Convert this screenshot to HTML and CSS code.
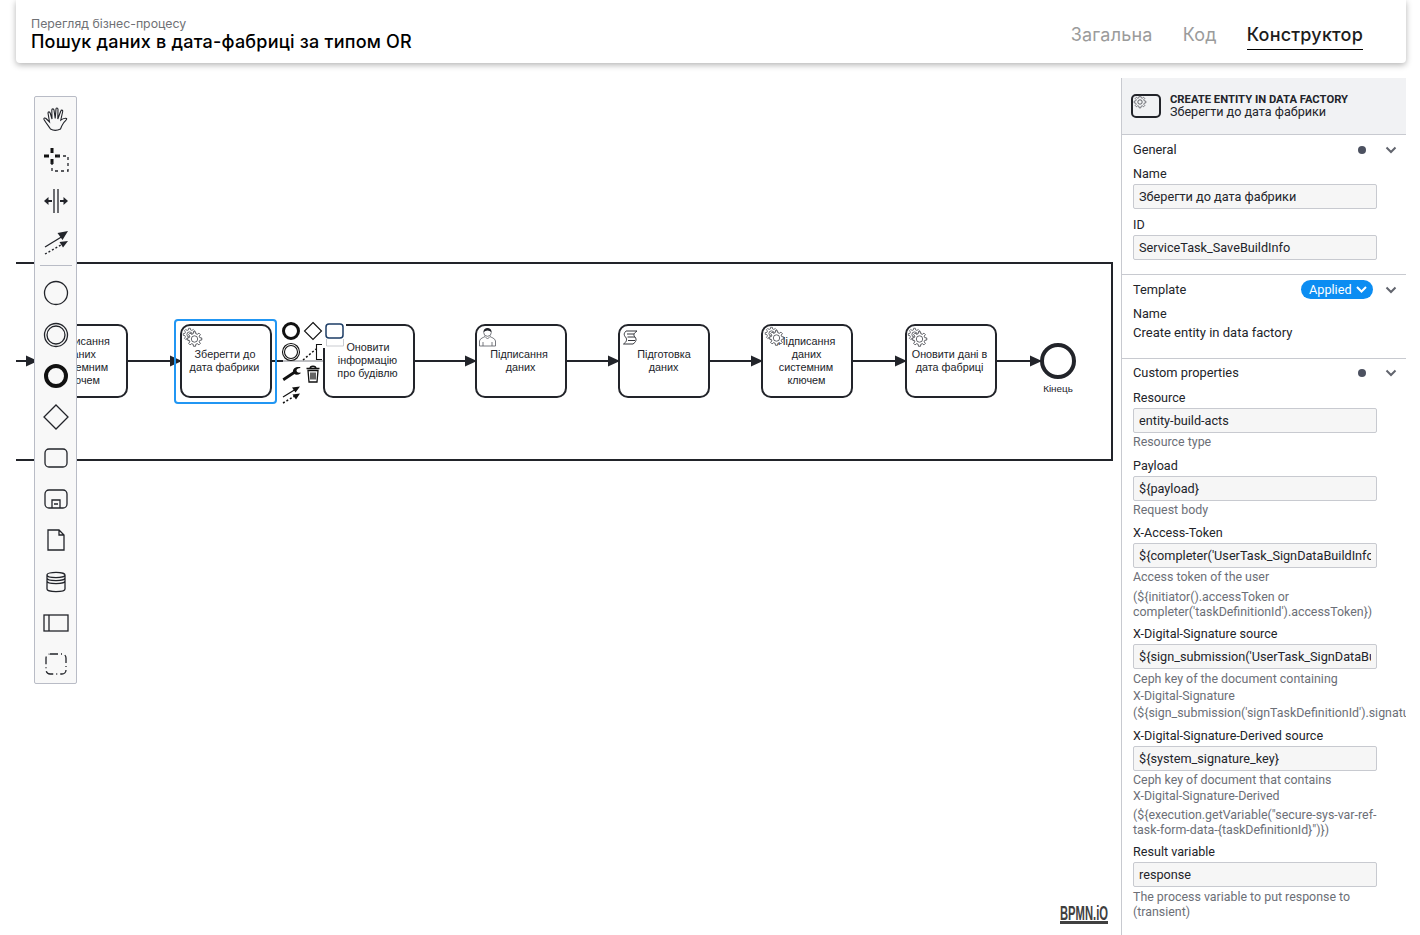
FILE: index.html
```html
<!DOCTYPE html>
<html>
	<head>
		<meta charset="utf-8">
		<title>Перегляд бізнес-процесу</title>
		<link rel="stylesheet" href="styles.css">
	</head>
	<body>
		<div class="top">
			<div class="top-title">
				<div class="top-sub">Перегляд бізнес-процесу</div>
				<div class="top-name">Пошук даних в дата-фабриці за типом OR</div>
			</div>
			<div class="tabs">
				<div class="tab">Загальна</div>
				<div class="tab">Код</div>
				<div class="tab tab-on">Конструктор</div>
			</div>
		</div>

		<div class="main">
			<div class="canvas">
				<svg class="diagram" width="1105" height="857" viewBox="16 78 1105 857">
					<defs>
						<polygon id="gear" points="5.05,-1.26 6.93,-.97 6.93,.97 5.05,1.26 4.46,2.68 5.59,4.21 4.21,5.59 2.68,4.46 1.26,5.05 .97,6.93 -.97,6.93 -1.26,5.05 -2.68,4.46 -4.21,5.59 -5.59,4.21 -4.46,2.68 -5.05,1.26 -6.93,.97 -6.93,-.97 -5.05,-1.26 -4.46,-2.68 -5.59,-4.21 -4.21,-5.59 -2.68,-4.46 -1.26,-5.05 -.97,-6.93 .97,-6.93 1.26,-5.05 2.68,-4.46 4.21,-5.59 5.59,-4.21 4.46,-2.68"/>
						<g id="service">
							<use href="#gear" class="gear" transform="translate(6.5,6.5) scale(.9)"/>
							<circle class="gear" cx="6.5" cy="6.5" r="2.6"/>
							<use href="#gear" class="gear" transform="translate(11.5,11) scale(1.05)"/>
							<circle class="gear" cx="11.5" cy="11" r="3.2"/>
						</g>
						<g id="arrowhead"><path d="M1 0 L-11 -5.500 L-11 5.500 Z" class="head"/></g>
					</defs>

					<path class="lane" d="M16 263 H1112 V460 H16"/>

					<path class="flow" d="M16 361 H37 M127 361 H181 M414 361 H476 M566 361 H619 M709 361 H762 M852 361 H906 M996 361 H1041 M271 361 H283"/>
					<path class="flow-thin" d="M283 361 H324"/>
					<use href="#arrowhead" x="37" y="361"/>
					<use href="#arrowhead" x="181" y="361"/>
					<use href="#arrowhead" x="476" y="361"/>
					<use href="#arrowhead" x="619" y="361"/>
					<use href="#arrowhead" x="762" y="361"/>
					<use href="#arrowhead" x="906" y="361"/>
					<use href="#arrowhead" x="1041" y="361"/>

					<rect class="task" x="37" y="325" width="90" height="72" rx="9"/>
					<text class="lbl" x="81" y="345">Підписання</text>
					<text class="lbl" x="81" y="358">даних</text>
					<text class="lbl" x="81" y="371">системним</text>
					<text class="lbl" x="81" y="384">ключем</text>

					<rect class="select" x="175" y="320" width="101" height="83" rx="3"/>
					<rect class="task" x="181" y="325" width="90" height="72" rx="9"/>
					<use href="#service" x="183" y="328"/>
					<text class="lbl" x="225" y="358">Зберегти до</text>
					<text class="lbl" x="224.500" y="371">дата фабрики</text>

					<rect class="task" x="324" y="325" width="90" height="72" rx="9"/>
					<text class="lbl" x="368" y="351">Оновити</text>
					<text class="lbl" x="367.500" y="364">інформацію</text>
					<text class="lbl" x="367.500" y="377">про будівлю</text>

					<rect class="task" x="476" y="325" width="90" height="72" rx="9"/>
					<circle class="user-head" cx="487.500" cy="332.500" r="3.800"/>
					<path class="user-hair" d="M483.500 332 C483.500 326.500 491.500 326.500 491.500 332 C489 330 486 330 483.500 332 Z"/>
					<path class="user-body" d="M479.500 346 V341 C480 338 484 337.500 485 336.500 L487.500 339 L490 336.500 C491 337.500 495 338 495.500 341 V346 Z M483 346 V342 M492 346 V342"/>
					<text class="lbl" x="519" y="358">Підписання</text>
					<text class="lbl" x="520.500" y="371">даних</text>

					<rect class="task" x="619" y="325" width="90" height="72" rx="9"/>
					<path class="script" d="M626 331 H637 C634 333 633 335 635 337 C637 339.500 636 342 633 344 H623.500 C626.500 342 627.500 339.500 625.500 337 C623.500 335 624 333 626 331 Z M627 334 H634 M627.500 337 H635 M628 340.500 H635"/>
					<text class="lbl" x="664" y="358">Підготовка</text>
					<text class="lbl" x="663.500" y="371">даних</text>

					<rect class="task" x="762" y="325" width="90" height="72" rx="9"/>
					<text class="lbl" x="806.500" y="345">Підписання</text>
					<text class="lbl" x="806.500" y="358">даних</text>
					<text class="lbl" x="806" y="371">системним</text>
					<text class="lbl" x="806.500" y="384">ключем</text>
					<use href="#service" x="765" y="327"/>

					<rect class="task" x="906" y="325" width="90" height="72" rx="9"/>
					<use href="#service" x="908" y="328"/>
					<text class="lbl" x="949.500" y="358">Оновити дані в</text>
					<text class="lbl" x="949.500" y="371">дата фабриці</text>

					<circle class="end" cx="1058" cy="361" r="16"/>
					<text class="lbl lbl-small" x="1058" y="392">Кінець</text>

					<!-- context pad -->
					<rect class="pad-mask" x="321" y="322" width="25" height="26"/>
					<path class="pad-stub" d="M326.500 339 V346 H343.500 V339"/>
					<circle class="pad-end" cx="291" cy="331" r="7.500"/>
					<path class="pad-line" d="M313 322.500 L321.500 331 L313 339.500 L304.500 331 Z"/>
					<rect class="pad-task" x="326" y="324" width="17" height="14" rx="3"/>
					<circle class="pad-line" cx="291" cy="352" r="8.500"/>
					<circle class="pad-line" cx="291" cy="352" r="6.500"/>
					<path class="pad-dots" d="M303 360 L316 349"/>
					<path class="pad-line" d="M322 344.500 H316.500 V359.500 H322"/>
					<path class="pad-fill" d="M282.500 378.500 L293 371.500 C292.800 368.500 295.500 366.500 300 367 L300.500 368 C298 368 296.500 369 296.500 370.500 C296.500 372 298 373 300.500 372.500 L300.500 373.500 C298 375 295.500 375 294.500 374 L284 381 Z"/>
					<path class="pad-trash" d="M306.500 368.500 H319.500 M310 368.500 C310 365.500 316 365.500 316 368.500 M308 370.500 L309 382 H317 L318 370.500 Z M311 372.500 V379.500 M313 372.500 V379.500 M315 372.500 V379.500"/>
					<path class="pad-line" d="M283 397 L296 389"/>
					<path class="pad-fill" d="M300 386.500 L292 387.500 L295.500 392.500 Z M300 393.500 L292.500 394.500 L296 399.500 Z"/>
					<path class="pad-dots" d="M283 403 L295 396"/>

					<text class="logo" x="1060" y="920" textLength="48" lengthAdjust="spacingAndGlyphs">BPMN.iO</text>
					<rect class="logo-bar" x="1060" y="921" width="48" height="3"/>
				</svg>

				<div class="palette">
					<div class="tool">
						<svg width="30" height="30" viewBox="0 0 30 30"><path class="ic-hand" d="M9.500 25 C7.500 22 5 19 3 15.500 C2.500 14 4 13.500 5 14.500 L8.500 18 L7 9 C7 7.500 8.800 7.500 9.200 9 L11 15 L10.800 6 C10.800 4.500 12.800 4.500 13 6 L14.200 14.500 L15 5 C15.200 3.500 17 3.700 17 5.500 L16.800 15 L19.800 7 C20.300 5.500 22 6 21.700 7.500 L19.800 16 C21 15 24 14 25.500 14.500 C26.500 15.500 24 17 22.500 19 C21.500 20.500 20.500 22 19.500 25 C16.500 26.500 12 26.500 9.500 25 Z"/></svg>
					</div>
					<div class="tool">
						<svg width="30" height="30" viewBox="0 0 30 30"><path class="ic-bold" d="M11 3 V8 M11 14 V19 M3 11 H8 M14 11 H19"/><path class="ic-dash" d="M16 11 H27 V26 H11 V16"/></svg>
					</div>
					<div class="tool">
						<svg width="30" height="30" viewBox="0 0 30 30"><path class="ic" d="M13 3 V27 M17 3 V27"/><path class="ic-fill" d="M3 15 L7.500 11 V14 H11 V16 H7.500 V19 Z M27 15 L22.500 11 V14 H19 V16 H22.500 V19 Z"/></svg>
					</div>
					<div class="tool">
						<svg width="30" height="30" viewBox="0 0 30 30"><path class="ic" d="M4 20 L22 9"/><path class="ic-fill" d="M27 4 L16.500 6 L21.500 13 Z M27 14 L18.500 15 L22 20.500 Z"/><path class="ic-dots" d="M4 27 L20 18"/></svg>
					</div>
					<div class="sep"></div>
					<div class="tool">
						<svg width="30" height="30" viewBox="0 0 30 30"><circle class="ic" cx="15" cy="15" r="11.500"/></svg>
					</div>
					<div class="tool">
						<svg width="30" height="30" viewBox="0 0 30 30"><circle class="ic" cx="15" cy="15" r="11.500"/><circle class="ic" cx="15" cy="15" r="9"/></svg>
					</div>
					<div class="tool">
						<svg width="30" height="30" viewBox="0 0 30 30"><circle class="ic-thick" cx="15" cy="15" r="10"/></svg>
					</div>
					<div class="tool">
						<svg width="30" height="30" viewBox="0 0 30 30"><path class="ic" d="M15 3 L27 15 L15 27 L3 15 Z"/></svg>
					</div>
					<div class="tool">
						<svg width="30" height="30" viewBox="0 0 30 30"><rect class="ic" x="4" y="6" width="22" height="18" rx="4"/></svg>
					</div>
					<div class="tool">
						<svg width="30" height="30" viewBox="0 0 30 30"><rect class="ic" x="4" y="6" width="22" height="18" rx="4"/><path class="ic" d="M11 24 V16 H19 V24 M13 20 H17"/></svg>
					</div>
					<div class="tool">
						<svg width="30" height="30" viewBox="0 0 30 30"><path class="ic" d="M7 5 H18 L23 10 V25 H7 Z M18 5 V10 H23"/></svg>
					</div>
					<div class="tool">
						<svg width="30" height="30" viewBox="0 0 30 30"><path class="ic" d="M6 8 C6 4.500 24 4.500 24 8 V22 C24 25.500 6 25.500 6 22 Z M6 8 C6 11.500 24 11.500 24 8 M6 11 C6 14.500 24 14.500 24 11 M6 14 C6 17.500 24 17.500 24 14"/></svg>
					</div>
					<div class="tool">
						<svg width="30" height="30" viewBox="0 0 30 30"><rect class="ic" x="3" y="7" width="24" height="16"/><path class="ic" d="M8 7 V23"/></svg>
					</div>
					<div class="tool">
						<svg width="30" height="30" viewBox="0 0 30 30"><rect class="ic-dashdot" x="5" y="5" width="20" height="20" rx="4"/></svg>
					</div>
				</div>
			</div>

			<div class="panel">
				<div class="panel-head">
					<svg class="panel-icon" width="30" height="24" viewBox="0 0 30 24">
						<rect class="ic-task" x="1" y="1" width="28" height="22" rx="4"/>
						<polygon class="ic-gear" transform="translate(9,8) scale(.85)" points="5.05,-1.26 6.93,-.97 6.93,.97 5.05,1.26 4.46,2.68 5.59,4.21 4.21,5.59 2.68,4.46 1.26,5.05 .97,6.93 -.97,6.93 -1.26,5.05 -2.68,4.46 -4.21,5.59 -5.59,4.21 -4.46,2.68 -5.05,1.26 -6.93,.97 -6.93,-.97 -5.05,-1.26 -4.46,-2.68 -5.59,-4.21 -4.21,-5.59 -2.68,-4.46 -1.26,-5.05 -.97,-6.93 .97,-6.93 1.26,-5.05 2.68,-4.46 4.21,-5.59 5.59,-4.21 4.46,-2.68"/>
						<circle class="ic-gear" cx="9" cy="8" r="2.200"/>
					</svg>
					<div class="panel-text">
						<div class="panel-type">CREATE ENTITY IN DATA FACTORY</div>
						<div class="panel-name">Зберегти до дата фабрики</div>
					</div>
				</div>

				<div class="group group-general">
					<div class="group-head">
						<span class="group-title">General</span>
						<span class="dot"></span>
						<svg class="chev" width="12" height="8" viewBox="0 0 12 8"><path d="M1.500 1.500 L6 6 L10.500 1.500"/></svg>
					</div>
					<div class="entry">
						<div class="label">Name</div>
						<input class="field" value="Зберегти до дата фабрики">
					</div>
					<div class="entry">
						<div class="label">ID</div>
						<input class="field" value="ServiceTask_SaveBuildInfo">
					</div>
				</div>

				<div class="group group-template">
					<div class="group-head">
						<span class="group-title">Template</span>
						<span class="badge">Applied
							<svg width="11" height="7" viewBox="0 0 11 7"><path d="M1 1 L5.500 5.500 L10 1"/></svg>
						</span>
						<svg class="chev" width="12" height="8" viewBox="0 0 12 8"><path d="M1.500 1.500 L6 6 L10.500 1.500"/></svg>
					</div>
					<div class="label label-name">Name</div>
					<div class="static">Create entity in data factory</div>
				</div>

				<div class="group">
					<div class="group-head">
						<span class="group-title">Custom properties</span>
						<span class="dot"></span>
						<svg class="chev" width="12" height="8" viewBox="0 0 12 8"><path d="M1.500 1.500 L6 6 L10.500 1.500"/></svg>
					</div>
					<div class="entry">
						<div class="label">Resource</div>
						<input class="field" value="entity-build-acts">
						<div class="desc">Resource type</div>
					</div>
					<div class="entry">
						<div class="label">Payload</div>
						<input class="field" value="${payload}">
						<div class="desc">Request body</div>
					</div>
					<div class="entry">
						<div class="label">X-Access-Token</div>
						<input class="field" value="${completer('UserTask_SignDataBuildInfo').accessToken}">
						<div class="desc">Access token of the user</div>
						<div class="desc desc-more desc-gap">(${initiator().accessToken or<br>completer('taskDefinitionId').accessToken})</div>
					</div>
					<div class="entry">
						<div class="label">X-Digital-Signature source</div>
						<input class="field" value="${sign_submission('UserTask_SignDataBuildInfo').signatureDocumentId}">
						<div class="desc desc-wide">Ceph key of the document containing<br>X-Digital-Signature<br>(${sign_submission('signTaskDefinitionId').signatureDocumentId})</div>
					</div>
					<div class="entry">
						<div class="label">X-Digital-Signature-Derived source</div>
						<input class="field" value="${system_signature_key}">
						<div class="desc">Ceph key of document that contains<br>X-Digital-Signature-Derived</div>
						<div class="desc desc-more">(${execution.getVariable("secure-sys-var-ref-<br>task-form-data-{taskDefinitionId}")})</div>
					</div>
					<div class="entry">
						<div class="label">Result variable</div>
						<input class="field" value="response">
						<div class="desc desc-more">The process variable to put response to<br>(transient)</div>
					</div>
				</div>
			</div>
		</div>
	</body>
</html>
```

FILE: styles.css
```css
*{
	margin: 0;
	padding: 0;
	box-sizing: border-box;
}

html,body{
	height: 100%;
	overflow: hidden;
	background: #fff;
}

body{
	font-family: "Inter", "Liberation Sans", sans-serif;
	color: #22242a;
}

/* top bar */
.top{
	display: flex;
	justify-content: space-between;
	align-items: center;
	height: 63px;
	margin: 0 14px 0 16px;
	padding: 0 43px 0 15px;
	background: #fff;
	border-radius: 0 0 4px 4px;
	box-shadow: 0 2px 6px rgba(0,0,0,0.3);
}
.top-title{
	margin-top: 5px;
}
.top-sub{
	font-size: 12.300px;
	line-height: 16px;
	padding-top: 1px;
	margin-bottom: -1px;
	color: #6f7175;
}
.top-name{
	font-size: 18px;
	line-height: 22px;
	font-weight: 500;
	letter-spacing: 0.22px;
	color: #000;
}
.tabs{
	display: flex;
	gap: 30px;
	margin-top: 10px;
}
.tab{
	font-size: 18px;
	line-height: 24px;
	letter-spacing: 0.2px;
	padding-bottom: 2px;
	color: #9b9b9b;
	border-bottom: 1px solid transparent;
}
.tab-on{
	color: #1d1d1d;
	font-weight: 500;
	border-bottom: 1px solid #000;
}

.main{
	display: flex;
	height: 857px;
	margin: 15px 14px 0 16px;
}

/* diagram */
.canvas{
	position: relative;
	flex: 1;
}
.diagram{
	display: block;
}
.lane,.flow,.task,.end{
	fill: none;
	stroke: #22242a;
	stroke-width: 2;
}
.task{
	fill: #fff;
}
.end{
	stroke-width: 4;
	fill: #fff;
}
.flow-thin{
	fill: none;
	stroke: #7d7f85;
	stroke-width: 1;
}
.head{
	fill: #22242a;
}
.select{
	fill: none;
	stroke: #2196f3;
	stroke-width: 2;
}
.lbl{
	font-family: "Liberation Sans", "DejaVu Sans", sans-serif;
	font-size: 10.8px;
	text-anchor: middle;
	fill: #22242a;
}
.lbl-small{
	font-size: 9.9px;
}
.gear{
	fill: #fff;
	stroke: #3f4148;
	stroke-width: 0.8;
}
.user-head{
	fill: #fff;
	stroke: #55585f;
	stroke-width: 0.8;
}
.user-hair{
	fill: #22242a;
}
.user-body{
	fill: #fff;
	stroke: #55585f;
	stroke-width: 0.8;
}
.script{
	fill: #fff;
	stroke: #33353b;
	stroke-width: 1;
}
.pad-mask{
	fill: #fff;
}
.pad-stub{
	fill: none;
	stroke: #c9cbd0;
	stroke-width: 1;
}
.pad-end{
	fill: none;
	stroke: #111;
	stroke-width: 3;
}
.pad-line{
	fill: none;
	stroke: #111;
	stroke-width: 1.1;
}
.pad-trash{
	fill: none;
	stroke: #111;
	stroke-width: 1.300;
}
.pad-task{
	fill: #fff;
	stroke: #1c3d66;
	stroke-width: 1.500;
}
.pad-dots{
	fill: none;
	stroke: #111;
	stroke-width: 1.500;
	stroke-dasharray: 2 2;
}
.pad-fill{
	fill: #111;
}
.logo{
	font-family: "Liberation Sans", sans-serif;
	font-size: 21px;
	font-weight: 700;
	fill: #404040;
}
.logo-bar{
	fill: #404040;
}

/* tool palette */
.palette{
	position: absolute;
	left: 18px;
	top: 18px;
	display: flex;
	flex-direction: column;
	align-items: center;
	width: 43px;
	height: 588px;
	padding-top: 1px;
	background: #f8f8f8;
	border: 1px solid #b9bcc6;
	border-radius: 2px;
}
.tool{
	display: flex;
	align-items: center;
	justify-content: center;
	flex: none;
	width: 100%;
	height: 41.200px;
}
.sep{
	flex: none;
	width: 32px;
	height: 1px;
	margin: 2px 0 7px;
	background: #b9bcc6;
}
.ic,.ic-task{
	fill: none;
	stroke: #22242a;
	stroke-width: 1.300;
}
.ic-hand{
	fill: none;
	stroke: #22242a;
	stroke-width: 1.100;
}
.ic-bold{
	fill: none;
	stroke: #111;
	stroke-width: 3;
}
.ic-dash{
	fill: none;
	stroke: #22242a;
	stroke-width: 1.300;
	stroke-dasharray: 3 3;
}
.ic-fill{
	fill: #22242a;
}
.ic-dots{
	fill: none;
	stroke: #22242a;
	stroke-width: 1.400;
	stroke-dasharray: 2 2;
}
.ic-thick{
	fill: none;
	stroke: #111;
	stroke-width: 4;
}
.ic-dashdot{
	fill: none;
	stroke: #22242a;
	stroke-width: 1.300;
	stroke-dasharray: 8 3 1 3;
}

/* properties panel */
.panel{
	flex: none;
	width: 285px;
	height: 857px;
	overflow: hidden;
	border-left: 1px solid #c8cad0;
	font-family: "Roboto", "Liberation Sans", sans-serif;
	font-size: 13px;
	color: #22242a;
}
.panel-head{
	display: flex;
	align-items: center;
	gap: 9px;
	height: 57px;
	padding: 0 0 0 9px;
	background: #f1f2f4;
	border-bottom: 1px solid #c8cad0;
}
.panel-icon{
	flex: none;
}
.panel-text{
	margin-bottom: 1px;
}
.ic-task{
	stroke-width: 2;
	fill: #f1f2f4;
}
.ic-gear{
	fill: none;
	stroke: #3f4148;
	stroke-width: 0.8;
}
.panel-type{
	font-size: 11.250px;
	line-height: 13px;
	font-weight: 700;
}
.panel-name{
	font-size: 12.600px;
	line-height: 12px;
}
.group{
	padding: 0 0 0 11px;
	border-bottom: 1px solid #c8cad0;
}
.group-general{
	height: 140px;
}
.group-template{
	height: 84px;
}
.group:last-child{
	border-bottom: none;
}
.group-head{
	display: flex;
	align-items: center;
	height: 27px;
	margin-bottom: 3px;
	padding-right: 9px;
}
.group-general .group-head,.group-template .group-head{
	padding-top: 2px;
}
.group-title{
	flex: 1;
	font-size: 12.800px;
}
.dot{
	width: 8px;
	height: 8px;
	margin-right: 19px;
	border-radius: 50%;
	background: #4c5160;
}
.chev path,.badge path{
	fill: none;
	stroke: #62656e;
	stroke-width: 2;
}
.badge{
	display: flex;
	align-items: center;
	gap: 4px;
	width: 72px;
	height: 19px;
	margin-right: 12px;
	padding: 0 0 0 8px;
	border-radius: 10px;
	background: #0c8df2;
	color: #fff;
	font-size: 12.700px;
	white-space: nowrap;
}
.badge path{
	stroke: #fff;
}
.entry{
	padding-bottom: 7px;
}
.entry:has(.desc){
	padding-bottom: 6px;
}
.label{
	font-size: 12.600px;
	line-height: 16px;
	padding-top: 1px;
	margin-bottom: 2px;
}
.label-name{
	margin: 2px 0 3px;
}
.static{
	font-size: 13px;
	line-height: 16px;
}
.field{
	display: block;
	width: 244px;
	height: 25px;
	padding: 0 5px;
	background: #f6f6f6;
	border: 1px solid #c8cad0;
	border-radius: 2px;
	font-family: "Roboto", "Liberation Sans", sans-serif;
	font-size: 12.700px;
	color: #22242a;
	outline: none;
}
.desc{
	margin-top: 1px;
	font-size: 12.400px;
	line-height: 16.500px;
	color: #6c6f77;
	white-space: nowrap;
}
.desc-more{
	margin-top: 2px;
	line-height: 15px;
}
.desc-gap{
	margin-top: 3px;
}
.desc-wide{
	line-height: 17px;
}
```
